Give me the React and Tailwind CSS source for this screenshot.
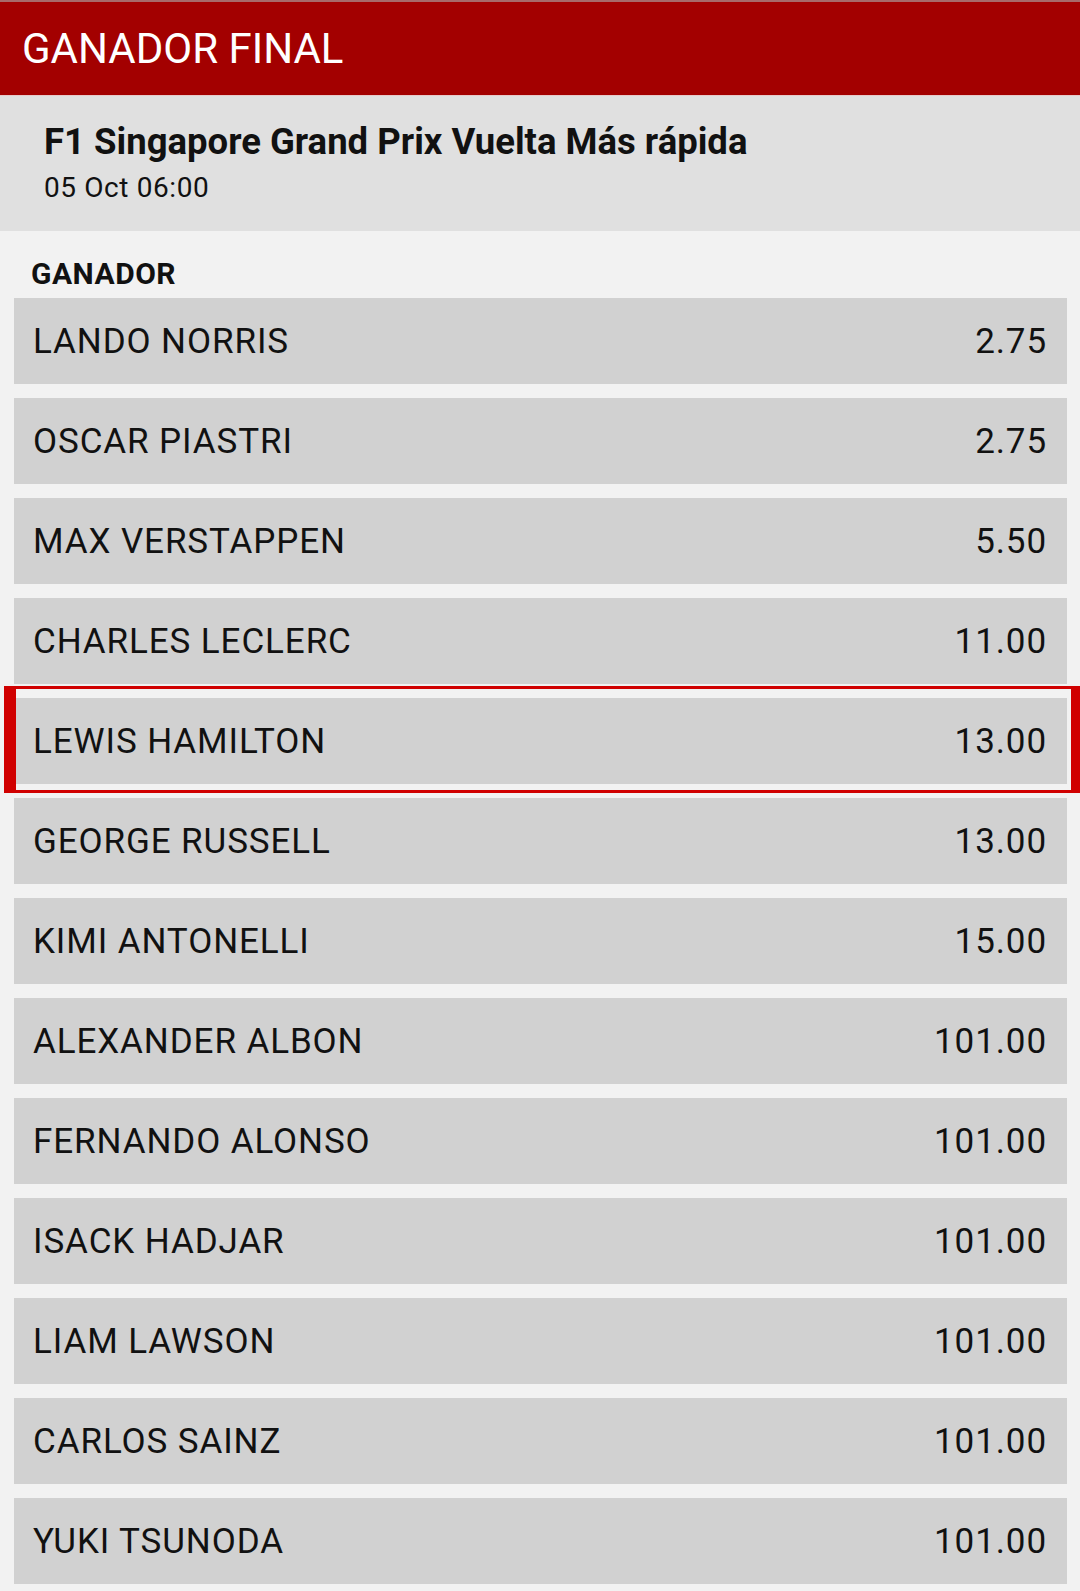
import React from 'react'

const runners = [
  { name: 'LANDO NORRIS', odds: '2.75' },
  { name: 'OSCAR PIASTRI', odds: '2.75' },
  { name: 'MAX VERSTAPPEN', odds: '5.50' },
  { name: 'CHARLES LECLERC', odds: '11.00' },
  { name: 'LEWIS HAMILTON', odds: '13.00', selected: true },
  { name: 'GEORGE RUSSELL', odds: '13.00' },
  { name: 'KIMI ANTONELLI', odds: '15.00' },
  { name: 'ALEXANDER ALBON', odds: '101.00' },
  { name: 'FERNANDO ALONSO', odds: '101.00' },
  { name: 'ISACK HADJAR', odds: '101.00' },
  { name: 'LIAM LAWSON', odds: '101.00' },
  { name: 'CARLOS SAINZ', odds: '101.00' },
  { name: 'YUKI TSUNODA', odds: '101.00' },
]

export default function App() {
  return (
    <div className="min-h-[1591px] w-[1080px] overflow-hidden bg-[#f2f2f2] font-['Roboto',sans-serif] text-[#111]">
      {/* ================= HEADER ================= */}
      <div className="flex h-[96px] items-center border-t-2 border-b border-t-[#a86a6a] border-b-[#e6caca] bg-[#a30000] pl-[22px]">
        <h1 className="text-[42px] leading-none text-white">GANADOR FINAL</h1>
      </div>

      {/* ================= EVENT ================= */}
      <div className="h-[135px] bg-[#e0e0e0] pl-[44px] pt-[24px]">
        <h2 className="text-[36.5px] font-bold leading-[44px]">F1 Singapore Grand Prix Vuelta Más rápida</h2>
        <p className="mt-[7px] text-[28px] leading-[34px] tracking-[0.6px]">05 Oct 06:00</p>
      </div>

      {/* ================= MARKET ================= */}
      <div className="pl-[31px] pt-[25px] pb-[6px]">
        <h3 className="text-[30px] font-bold leading-[36px] tracking-[0.5px]">GANADOR</h3>
      </div>

      <div className="flex flex-col gap-[14px] pl-[14px] pr-[13px] pb-[8px]">
        {runners.map((r) => (
          <Row key={r.name} {...r} />
        ))}
      </div>
    </div>
  )
}

/* ================= UI HELPERS ================= */
const Row = ({ name, odds, selected }) => (
  <div className="relative flex h-[86px] items-center justify-between bg-[#d1d1d1] pl-[19px] pr-[20px] text-[35px] leading-none tracking-[0.9px]">
    <span>{name}</span>
    <span>{odds}</span>
    {selected && (
      <div className="pointer-events-none absolute -top-[12px] -bottom-[9px] -left-[10px] -right-[16px] border-x-[12px] border-y-[3px] border-[#d00000]" />
    )}
  </div>
)
